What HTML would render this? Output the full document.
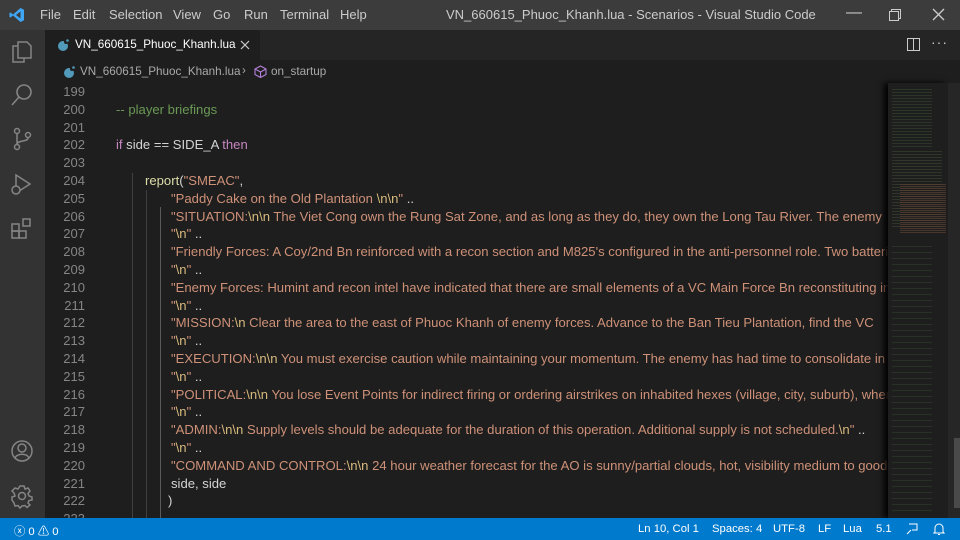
<!DOCTYPE html>
<html><head><meta charset="utf-8"><style>
*{margin:0;padding:0;box-sizing:border-box}
body{width:960px;height:540px;overflow:hidden;background:#1e1e1e;font-family:"Liberation Sans",sans-serif;position:relative}
.title{position:absolute;left:0;top:0;width:960px;height:30px;background:#3c3c3c;color:#ccc;font-size:13px}
.title span{position:absolute;top:7px}
.act{position:absolute;left:0;top:30px;width:45px;height:488px;background:#333}
.tabs{position:absolute;left:45px;top:30px;width:915px;height:30px;background:#252526}
.tab{position:absolute;left:0;top:0;width:215px;height:30px;background:#1e1e1e;color:#fff;font-size:11.7px}
.bc{position:absolute;left:45px;top:60px;width:915px;height:23px;background:#1e1e1e;color:#a9a9a9;font-size:11.7px}
.ed{position:absolute;left:45px;top:83px;width:843px;height:435px;overflow:hidden}
.ln{position:absolute;left:0;width:40px;text-align:right;color:#858585;font-size:13px}
.cd{position:absolute;white-space:pre;font-size:13.1px;color:#d4d4d4}
.s{color:#ce9178}.e{color:#d7ba7d}.k{color:#c586c0}.c{color:#6a9955}.f{color:#dcdcaa}
.g{position:absolute;width:1px;background:#404040}
.mm{position:absolute;left:888px;top:83px;width:60px;height:435px;background:#1e1e1e;box-shadow:-4px 0 6px #000}
.sb{position:absolute;left:948px;top:83px;width:12px;height:435px;background:#262626}
.st{position:absolute;left:0;top:518px;width:960px;height:22px;background:#007acc;color:#fff;font-size:11.3px}
.st span{position:absolute;top:5px}
</style></head><body>
<div class="title">
<svg style="position:absolute;left:9px;top:7px" width="16" height="16" viewBox="0 0 16 16"><path d="M11.5 1 L15 2.7 V13.3 L11.5 15 L4 8.5 L1.5 10.5 L0.5 10 V6 L1.5 5.5 L4 7.5 Z M11.5 4.5 L7 8 L11.5 11.5 Z" fill="#3ea6f5"/></svg>
<span style="left:40px">File</span><span style="left:73px">Edit</span><span style="left:109px">Selection</span><span style="left:173px">View</span><span style="left:213px">Go</span><span style="left:244px">Run</span><span style="left:280px">Terminal</span><span style="left:340px">Help</span>
<span style="left:446px">VN_660615_Phuoc_Khanh.lua - Scenarios - Visual Studio Code</span>
<span style="left:846px;top:4px;font-size:16px">—</span>
<svg style="position:absolute;left:889px;top:9px" width="12" height="12"><rect x="0.5" y="2.5" width="9" height="9" fill="none" stroke="#ccc"/><path d="M2.5 2.5V0.5H11.5V9.5H9.5" fill="none" stroke="#ccc"/></svg>
<svg style="position:absolute;left:932px;top:8px" width="13" height="13"><path d="M1 1L12 12M12 1L1 12" stroke="#ccc" stroke-width="1.3"/></svg>
</div>
<div class="act">
<svg style="position:absolute;left:10px;top:8px" width="24" height="26" viewBox="0 0 24 26" fill="none" stroke="#858585" stroke-width="1.5"><path d="M8 4H17L21 8V20H8Z"/><path d="M8 8H3V24H14V20"/></svg>
<svg style="position:absolute;left:10px;top:52px" width="24" height="26" fill="none" stroke="#858585" stroke-width="1.6"><circle cx="14" cy="10" r="7"/><path d="M9 15L2 23"/></svg>
<svg style="position:absolute;left:10px;top:96px" width="24" height="26" fill="none" stroke="#858585" stroke-width="1.5"><circle cx="7" cy="5" r="2.5"/><circle cx="7" cy="21" r="2.5"/><circle cx="18" cy="9" r="2.5"/><path d="M7 8V18M18 12C18 16 8 14 7 18"/></svg>
<svg style="position:absolute;left:10px;top:141px" width="24" height="26" fill="none" stroke="#858585" stroke-width="1.5"><path d="M6 4L20 13L6 22Z"/><circle cx="6" cy="19" r="4" fill="#333"/></svg>
<svg style="position:absolute;left:10px;top:186px" width="24" height="26" fill="none" stroke="#858585" stroke-width="1.5"><rect x="2" y="8" width="7" height="7"/><rect x="9" y="15" width="7" height="7"/><rect x="2" y="15" width="7" height="7"/><rect x="13" y="3" width="7" height="7"/></svg>
<svg style="position:absolute;left:10px;top:408px" width="24" height="26" fill="none" stroke="#858585" stroke-width="1.5"><circle cx="12" cy="13" r="10"/><circle cx="12" cy="10" r="4"/><path d="M5 20C7 15 17 15 19 20"/></svg>
<svg style="position:absolute;left:10px;top:453px" width="24" height="26" fill="none" stroke="#858585" stroke-width="1.5"><circle cx="12" cy="13" r="3.5"/><path d="M10 3H14L15 6L18 5L20 8L18 10.5L19 13L22 14V17L19 17.5L18 20L20 22L17 24.5L15 22.5L12 23L10 25L8 22.5L5 23L4 20L2 17V14L5 13L4 10L2 8L5 5L8 6Z"/></svg>
</div>
<div class="tabs"><div class="tab">
<svg style="position:absolute;left:12px;top:9px" width="12" height="12"><circle cx="6" cy="7" r="5" fill="#519aba"/><circle cx="9" cy="3" r="2" fill="#1e1e1e"/><circle cx="10.5" cy="1.5" r="1.3" fill="#519aba"/></svg>
<span style="position:absolute;left:30px;top:8px">VN_660615_Phuoc_Khanh.lua</span>
<svg style="position:absolute;left:195px;top:10px" width="10" height="10"><path d="M1 1L9 9M9 1L1 9" stroke="#ccc" stroke-width="1.2"/></svg>
</div>
<svg style="position:absolute;left:862px;top:8px" width="13" height="13"><rect x="0.5" y="0.5" width="12" height="12" fill="none" stroke="#ccc"/><path d="M6.5 0.5V12.5" stroke="#ccc"/></svg>
<span style="position:absolute;left:886px;top:4px;color:#ccc;font-size:14px;letter-spacing:1px">···</span>
</div>
<div class="bc">
<svg style="position:absolute;left:18px;top:6px" width="12" height="12"><circle cx="6" cy="7" r="5" fill="#519aba"/><circle cx="9" cy="3" r="2" fill="#1e1e1e"/><circle cx="10.5" cy="1.5" r="1.3" fill="#519aba"/></svg>
<span style="position:absolute;left:35px;top:5px">VN_660615_Phuoc_Khanh.lua</span>
<span style="position:absolute;left:197px;top:4px">›</span>
<svg style="position:absolute;left:209px;top:5px" width="13" height="13" fill="none" stroke="#b180d7" stroke-width="1.1"><path d="M6.5 1L12 4V9.5L6.5 12.5L1 9.5V4Z M1 4L6.5 7L12 4 M6.5 7V12.5"/></svg>
<span style="position:absolute;left:226px;top:5px">on_startup</span>
</div>
<div class="ed">
<div class="g" style="left:87px;top:90px;height:345px"></div>
<div class="g" style="left:101px;top:107px;height:328px"></div>
<div class="g" style="left:115px;top:124px;height:311px;background:#5a5a5a"></div>
<div id="lines"></div>
</div>
<div class="mm">
<div style="position:absolute;left:4px;top:4px;width:40px;height:60px;background:repeating-linear-gradient(#1e1e1e 0 2px,#33452e 2px 3px);opacity:.6"></div>
<div style="position:absolute;left:4px;top:66px;width:50px;height:80px;background:repeating-linear-gradient(#1e1e1e 0 2px,#3b4530 2px 3px);opacity:.6"></div>
<div style="position:absolute;left:12px;top:100px;width:46px;height:50px;background:repeating-linear-gradient(#1e1e1e 0 1px,#5a4032 1px 2px);opacity:.7"></div>
<div style="position:absolute;left:4px;top:160px;width:40px;height:270px;background:repeating-linear-gradient(#1e1e1e 0 3px,#33452e 3px 4px,#1e1e1e 4px 6px);opacity:.5"></div>
</div>
<div class="sb"><div style="position:absolute;left:6px;top:355px;width:6px;height:70px;background:#4a4a4a"></div></div>
<div class="st">
<span style="left:14px">ⓧ 0 ⚠ 0</span>
<span style="left:638px">Ln 10, Col 1</span><span style="left:712px">Spaces: 4</span><span style="left:773px">UTF-8</span><span style="left:818px">LF</span><span style="left:843px">Lua</span><span style="left:876px">5.1</span>
<svg style="position:absolute;left:905px;top:4px" width="14" height="14" fill="none" stroke="#fff"><path d="M2 12L6 8M4 2H12V8H7"/></svg>
<svg style="position:absolute;left:933px;top:4px" width="12" height="14" fill="none" stroke="#fff"><path d="M2 10V6A4 4 0 0 1 10 6V10L11 11H1Z M5 12.5H7"/></svg>
</div>
<script>
const L=[
[199,''],
[200,'<span class="c">-- player briefings</span>',116],
[201,''],
[202,'<span class="k">if</span> side == SIDE_A <span class="k">then</span>',116],
[203,''],
[204,'<span class="f">report</span>(<span class="s">"SMEAC"</span>,',145],
[205,'<span class="s">"Paddy Cake on the Old Plantation <span class="e">\\n\\n</span>"</span> ..',171],
[206,'<span class="s">"SITUATION:<span class="e">\\n\\n</span> The Viet Cong own the Rung Sat Zone, and as long as they do, they own the Long Tau River. The enemy</span>',171],
[207,'<span class="s">"<span class="e">\\n</span>"</span> ..',171],
[208,'<span class="s">"Friendly Forces: A Coy/2nd Bn reinforced with a recon section and M825\'s configured in the anti-personnel role. Two batteries</span>',171],
[209,'<span class="s">"<span class="e">\\n</span>"</span> ..',171],
[210,'<span class="s">"Enemy Forces: Humint and recon intel have indicated that there are small elements of a VC Main Force Bn reconstituting in</span>',171],
[211,'<span class="s">"<span class="e">\\n</span>"</span> ..',171],
[212,'<span class="s">"MISSION:<span class="e">\\n</span> Clear the area to the east of Phuoc Khanh of enemy forces. Advance to the Ban Tieu Plantation, find the VC</span>',171],
[213,'<span class="s">"<span class="e">\\n</span>"</span> ..',171],
[214,'<span class="s">"EXECUTION:<span class="e">\\n\\n</span> You must exercise caution while maintaining your momentum. The enemy has had time to consolidate in</span>',171],
[215,'<span class="s">"<span class="e">\\n</span>"</span> ..',171],
[216,'<span class="s">"POLITICAL:<span class="e">\\n\\n</span> You lose Event Points for indirect firing or ordering airstrikes on inhabited hexes (village, city, suburb), where</span>',171],
[217,'<span class="s">"<span class="e">\\n</span>"</span> ..',171],
[218,'<span class="s">"ADMIN:<span class="e">\\n\\n</span> Supply levels should be adequate for the duration of this operation. Additional supply is not scheduled.<span class="e">\\n</span>"</span> ..',171],
[219,'<span class="s">"<span class="e">\\n</span>"</span> ..',171],
[220,'<span class="s">"COMMAND AND CONTROL:<span class="e">\\n\\n</span> 24 hour weather forecast for the AO is sunny/partial clouds, hot, visibility medium to good</span>',171],
[221,'side, side',171],
[222,')',168],
[223,'']];
let h='';
L.forEach((l,i)=>{const y=i*17.8+1;h+=`<div class="ln" style="top:${y}px">${l[0]}</div>`;if(l[1])h+=`<div class="cd" style="left:${l[2]-45}px;top:${y}px">${l[1]}</div>`;});
document.getElementById('lines').innerHTML=h;
</script>
</body></html>
